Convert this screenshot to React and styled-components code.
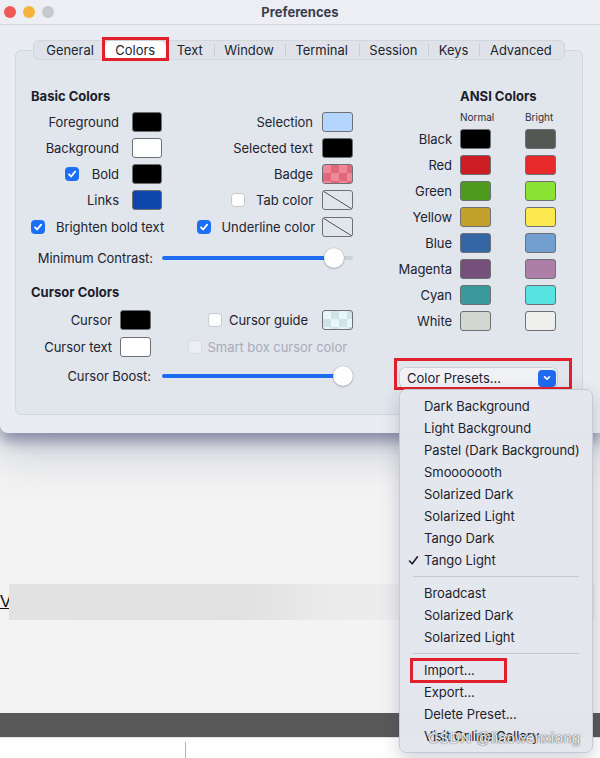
import React from "react";
import styled, { createGlobalStyle } from "styled-components";

const GlobalStyle = createGlobalStyle`
  html, body {
    margin: 0;
    padding: 0;
  }
  body {
    font-family: Inter, "Liberation Sans", sans-serif;
    background: #f3f3f3;
    color: #1f2130;
  }
`;

const tabs = ["General", "Colors", "Text", "Window", "Terminal", "Session", "Keys", "Advanced"];

const basicRows = [
  { label: "Foreground", color: "#000000", right: "Selection", rcolor: "#b4d5fd" },
  { label: "Background", color: "#ffffff", right: "Selected text", rcolor: "#000000" },
  { label: "Bold", check: true, color: "#000000", right: "Badge", rkind: "badge" },
  { label: "Links", color: "#0f46ab", right: "Tab color", rcheck: false, rkind: "none" },
];

const ansi = [
  ["Black", "#000000", "#555753"],
  ["Red", "#cc1d24", "#e8292a"],
  ["Green", "#4e9a1f", "#8ae234"],
  ["Yellow", "#c4a02d", "#fce94f"],
  ["Blue", "#3465a4", "#729fcf"],
  ["Magenta", "#75507b", "#ad7fa8"],
  ["Cyan", "#3a9a9b", "#57e3e1"],
  ["White", "#d3d7cf", "#eeeeec"],
];

const presetGroups = [
  [
    "Dark Background",
    "Light Background",
    "Pastel (Dark Background)",
    "Smooooooth",
    "Solarized Dark",
    "Solarized Light",
    "Tango Dark",
    "Tango Light",
  ],
  ["Broadcast", "Solarized Dark", "Solarized Light"],
  ["Import...", "Export...", "Delete Preset...", "Visit Online Gallery"],
];

const Page = styled.div`
  position: relative;
  width: 600px;
  height: 758px;
  overflow: hidden;
  background: #f3f3f3;
  display: flex;
  flex-direction: column;
`;

const Window = styled.div`
  position: relative;
  z-index: 1;
  flex: none;
  width: 600px;
  height: 433px;
  background: #e9ecf0;
  border-radius: 0 0 0 8px;
  box-shadow: 0 8px 14px rgba(60, 70, 110, 0.5), 0 22px 40px rgba(100, 110, 150, 0.28);
  display: flex;
  flex-direction: column;
`;

const TitleBar = styled.div`
  height: 24px;
  border-bottom: 1px solid #d3d6dd;
  background: #eceef3;
  display: grid;
  grid-template-columns: 1fr auto 1fr;
  align-items: center;
  padding: 0 4px;
`;

const Lights = styled.div`
  display: flex;
  gap: 7px;
`;

const Light = styled.span`
  width: 12px;
  height: 12px;
  border-radius: 50%;
  background: ${(p) => p.$c};
`;

const Title = styled.div`
  font-size: 13px;
  font-weight: 700;
  color: #3c3e4f;
`;

const Body = styled.div`
  flex: 1;
  display: flex;
  flex-direction: column;
  padding: 15px 17px 18px 15px;
`;

const Tabs = styled.div`
  position: relative;
  z-index: 1;
  align-self: center;
  display: flex;
  height: 18px;
  padding: 0 1px;
  background: #dfe3e9;
  border: 1px solid #d2d6dd;
  border-radius: 6px;
`;

const Tab = styled.div`
  position: relative;
  display: flex;
  align-items: center;
  padding: 0 10.8px;
  font-size: 13px;
  letter-spacing: -0.05px;
  color: #22242f;
  border-radius: 5px;
  background: ${(p) => (p.$active ? "#ffffff" : "transparent")};
  box-shadow: ${(p) => (p.$active ? "0 0 1px rgba(0,0,0,0.35)" : "none")};

  &::before {
    content: "";
    display: ${(p) => (p.$sep ? "block" : "none")};
    position: absolute;
    left: 0;
    top: 3px;
    width: 1px;
    height: 12px;
    background: #c9cdd4;
  }

  &::after {
    content: "";
    display: ${(p) => (p.$marked ? "block" : "none")};
    position: absolute;
    left: -3px;
    right: -3px;
    top: -4px;
    bottom: -2px;
    border: 3px solid #e2202c;
  }
`;

const GroupBox = styled.div`
  flex: 1;
  margin-top: -10px;
  background: #e1e5ec;
  border: 1px solid #d2d7df;
  border-radius: 6px;
  padding: 0 25px 0 15px;
  display: flex;
  justify-content: space-between;
`;

const LeftCol = styled.div`
  width: 322px;
  padding-top: 37px;
  display: flex;
  flex-direction: column;
`;

const RightCol = styled.div`
  width: 159px;
  padding-top: 37px;
  display: flex;
  flex-direction: column;
  align-items: flex-start;
`;

const Heading = styled.div`
  font-size: 13px;
  font-weight: 700;
  line-height: 16px;
  color: #1c1e2b;
  margin: ${(p) => p.$m || "0"};
`;

const BasicGrid = styled.div`
  display: grid;
  grid-template-columns: 101px 30px 160px 31px;
  grid-auto-rows: 26px;
  align-items: center;
`;

const CursorGrid = styled.div`
  display: grid;
  grid-template-columns: 89px 31px 171px 31px;
  grid-auto-rows: 27px;
  align-items: center;
`;

const Label = styled.div`
  display: flex;
  align-items: center;
  justify-content: ${(p) => (p.$start ? "flex-start" : "flex-end")};
  gap: ${(p) => p.$gap || 11}px;
  padding-right: ${(p) => p.$pr || 0}px;
  grid-column: ${(p) => p.$span || "auto"};
  font-size: 13px;
  letter-spacing: -0.05px;
  white-space: nowrap;
  color: ${(p) => (p.$disabled ? "#a7acb9" : "#22242f")};
`;

const Swatch = styled.div`
  box-sizing: border-box;
  width: ${(p) => p.$w || 31}px;
  height: 20px;
  border: 1px solid #6e7075;
  border-radius: 3px;
  background: ${(p) => {
    if (p.$kind === "badge")
      return "repeating-conic-gradient(#e1687b 0 25%, #ef8799 0 50%) 0 0 / 16px 16px";
    if (p.$kind === "guide")
      return "repeating-conic-gradient(#cfe3e8 0 25%, #e8f6f8 0 50%) 0 0 / 16px 16px";
    if (p.$kind === "none")
      return "linear-gradient(to top right, transparent calc(50% - 0.8px), #4b4d52 50%, transparent calc(50% + 0.8px))";
    return p.$c;
  }};
`;

const Box = styled.span`
  box-sizing: border-box;
  flex: none;
  width: 14px;
  height: 14px;
  border-radius: 3.5px;
  display: flex;
  align-items: center;
  justify-content: center;
  background: ${(p) => (p.$on ? "#1b6ff5" : p.$disabled ? "#eceef2" : "#ffffff")};
  border: 1px solid ${(p) => (p.$on ? "#1b6ff5" : p.$disabled ? "#d6d9df" : "#c5c9d0")};
`;

const Check = ({ on, disabled }) => (
  <Box $on={on} $disabled={disabled}>
    {on && (
      <svg width="10" height="10" viewBox="0 0 10 10">
        <path
          d="M2 5.3 L4.1 7.5 L8.1 2.6"
          fill="none"
          stroke="#fff"
          strokeWidth="1.8"
          strokeLinecap="round"
          strokeLinejoin="round"
        />
      </svg>
    )}
  </Box>
);

const SliderRow = styled.div`
  display: grid;
  grid-template-columns: 131px 191px;
  height: 26px;
  align-items: center;
  margin-top: ${(p) => p.$mt}px;
`;

const SliderBox = styled.div`
  position: relative;
  height: 20px;
  display: flex;
  align-items: center;
`;

const Track = styled.div`
  width: 100%;
  height: 4px;
  border-radius: 2px;
`;

const Thumb = styled.div`
  position: absolute;
  top: 0;
  width: 20px;
  height: 20px;
  border-radius: 50%;
  background: #ffffff;
  box-shadow: 0 0 1px rgba(0, 0, 0, 0.4), 0 1px 2px rgba(0, 0, 0, 0.2);
`;

const Slider = ({ value }) => {
  const left = value * 171;
  const fill = left + 10;
  return (
    <SliderBox>
      <Track
        style={{
          background: `linear-gradient(to right, #1e6cf0 ${fill}px, #cdd2da ${fill}px)`,
        }}
      />
      <Thumb style={{ left }} />
    </SliderBox>
  );
};

const AnsiGrid = styled.div`
  display: grid;
  grid-template-columns: 62px 65px 32px;
  grid-template-rows: 15px;
  grid-auto-rows: 26px;
  align-items: center;
`;

const ColHead = styled.div`
  font-size: 10px;
  color: #2a2c38;
  align-self: start;
  line-height: 12px;
`;

const PopupButton = styled.div`
  position: relative;
  box-sizing: border-box;
  margin: 34px 0 0 2px;
  width: 157px;
  height: 20px;
  display: flex;
  align-items: center;
  justify-content: space-between;
  padding: 0 1px 0 7px;
  background: #f1f2f5;
  border-radius: 5px;
  box-shadow: 0 0 0 0.5px rgba(0, 0, 0, 0.18), 0 1px 1px rgba(0, 0, 0, 0.1);
  font-size: 13px;
  color: #1f2130;

  &::after {
    content: "";
    position: absolute;
    left: -6px;
    right: -15px;
    top: -10px;
    bottom: -2px;
    border: 3px solid #e2202c;
  }
`;

const Chevron = styled.span`
  width: 18px;
  height: 17px;
  border-radius: 4px;
  background: #1f6af2;
  display: flex;
  align-items: center;
  justify-content: center;
`;

const Below = styled.div`
  flex: 1;
  display: flex;
  flex-direction: column;
  padding-top: 151px;
`;

const BandRow = styled.div`
  display: flex;
  align-items: center;
  height: 36px;
`;

const LinkText = styled.span`
  width: 9px;
  overflow: hidden;
  font-family: "Liberation Sans", sans-serif;
  font-size: 17px;
  color: #111;
  text-decoration: underline;
  white-space: nowrap;
`;

const Band = styled.div`
  width: 586px;
  height: 36px;
  background: linear-gradient(90deg, #e2e2e2 0%, #e1e1e1 40%, #ebebeb 55%, #eeeff0 85%, #e8eaee 100%);
`;

const DarkBar = styled.div`
  margin-top: 93px;
  height: 24px;
  background: #595959;
`;

const Footer = styled.div`
  flex: 1;
  background: #ffffff;
  border-top: 1px solid #e4e4e4;
`;

const Divider = styled.div`
  margin: 4px 0 0 185px;
  width: 1px;
  height: 17px;
  background: #b5b5b5;
`;

const Menu = styled.div`
  position: absolute;
  z-index: 5;
  left: 399px;
  top: 389px;
  width: 194px;
  box-sizing: border-box;
  padding: 5px 0;
  background: rgba(228, 231, 238, 0.98);
  border: 1px solid #c4c9d3;
  border-radius: 7px;
  box-shadow: 0 6px 18px rgba(40, 50, 80, 0.22);
`;

const MenuItem = styled.div`
  position: relative;
  height: 22px;
  display: grid;
  grid-template-columns: 24px 1fr;
  align-items: center;
  font-size: 13px;
  letter-spacing: -0.05px;
  color: #1d1f2c;
  white-space: nowrap;

  &::after {
    content: "";
    display: ${(p) => (p.$marked ? "block" : "none")};
    position: absolute;
    left: 10px;
    width: 97px;
    top: -1px;
    bottom: -2px;
    box-sizing: border-box;
    border: 3px solid #e2202c;
  }
`;

const MenuCheck = styled.span`
  display: flex;
  padding-left: 8px;
`;

const Separator = styled.div`
  height: 11px;
  display: flex;
  align-items: center;
  padding: 0 13px;

  &::before {
    content: "";
    flex: 1;
    height: 1px;
    background: #c5c9d1;
  }
`;

const Watermark = styled.div`
  position: absolute;
  z-index: 6;
  left: 428px;
  top: 729px;
  font-family: "Liberation Sans", sans-serif;
  font-size: 15px;
  color: rgba(255, 255, 255, 0.92);
  text-shadow: 0 0 1px rgba(40, 40, 40, 0.9), 0 0 2px rgba(60, 60, 60, 0.5);
  letter-spacing: 0.2px;
`;

export default function App() {
  return (
    <>
      <GlobalStyle />
      <Page>
        <Window>
          <TitleBar>
            <Lights>
              <Light $c="#ee5b52" />
              <Light $c="#f5b33c" />
              <Light $c="#c7cacd" />
            </Lights>
            <Title>Preferences</Title>
            <span />
          </TitleBar>
          <Body>
            <Tabs>
              {tabs.map((t, i) => (
                <Tab
                  key={t}
                  $active={t === "Colors"}
                  $marked={t === "Colors"}
                  $sep={i > 0 && t !== "Colors" && tabs[i - 1] !== "Colors"}
                >
                  {t}
                </Tab>
              ))}
            </Tabs>
            <GroupBox>
              <LeftCol>
                <Heading $m="0 0 5px">Basic Colors</Heading>
                <BasicGrid>
                  {basicRows.map((r) => (
                    <React.Fragment key={r.label}>
                      <Label $pr={13} $gap={13}>
                        {r.check && <Check on />}
                        {r.label}
                      </Label>
                      <Swatch $w={30} $c={r.color} />
                      <Label $pr={9}>
                        {r.rcheck !== undefined && <Check on={r.rcheck} />}
                        {r.right}
                      </Label>
                      <Swatch $c={r.rcolor} $kind={r.rkind} />
                    </React.Fragment>
                  ))}
                  <Label $start $span="1 / 3" style={{ marginTop: 2 }}>
                    <Check on />
                    Brighten bold text
                  </Label>
                  <Label $pr={7} $gap={10} style={{ marginTop: 2 }}>
                    <Check on />
                    Underline color
                  </Label>
                  <Swatch $kind="none" style={{ marginTop: 2 }} />
                </BasicGrid>
                <SliderRow $mt={6}>
                  <Label $pr={9}>Minimum Contrast:</Label>
                  <Slider value={0.95} />
                </SliderRow>
                <Heading $m="13px 0 6px">Cursor Colors</Heading>
                <CursorGrid>
                  <Label $pr={8}>Cursor</Label>
                  <Swatch $c="#000000" />
                  <Label $pr={14} $gap={7}>
                    <Check />
                    Cursor guide
                  </Label>
                  <Swatch $kind="guide" />
                  <Label $pr={8}>Cursor text</Label>
                  <Swatch $c="#ffffff" />
                  <Label $span="3 / 5" $pr={6} $gap={6} $disabled>
                    <Check disabled />
                    Smart box cursor color
                  </Label>
                </CursorGrid>
                <SliderRow $mt={3}>
                  <Label $pr={11}>Cursor Boost:</Label>
                  <Slider value={1} />
                </SliderRow>
              </LeftCol>
              <RightCol>
                <Heading $m="0 0 7px 62px">ANSI Colors</Heading>
                <AnsiGrid>
                  <span />
                  <ColHead>Normal</ColHead>
                  <ColHead>Bright</ColHead>
                  {ansi.map(([name, n, b]) => (
                    <React.Fragment key={name}>
                      <Label $pr={8}>{name}</Label>
                      <Swatch $c={n} />
                      <Swatch $c={b} />
                    </React.Fragment>
                  ))}
                </AnsiGrid>
                <PopupButton>
                  Color Presets...
                  <Chevron>
                    <svg width="10" height="10" viewBox="0 0 10 10">
                      <path
                        d="M2.6 3.8 L5 6.2 L7.4 3.8"
                        fill="none"
                        stroke="#fff"
                        strokeWidth="1.7"
                        strokeLinecap="round"
                        strokeLinejoin="round"
                      />
                    </svg>
                  </Chevron>
                </PopupButton>
              </RightCol>
            </GroupBox>
          </Body>
        </Window>

        <Below>
          <BandRow>
            <LinkText>Vi</LinkText>
            <Band />
          </BandRow>
          <DarkBar />
          <Footer>
            <Divider />
          </Footer>
        </Below>

        <Menu>
          {presetGroups.map((group, gi) => (
            <React.Fragment key={gi}>
              {gi > 0 && <Separator />}
              {group.map((item) => (
                <MenuItem key={item} $marked={item === "Import..."}>
                  <MenuCheck>
                    {item === "Tango Light" && (
                      <svg width="11" height="11" viewBox="0 0 11 11">
                        <path
                          d="M1.5 6 L4.2 8.8 L9.5 1.8"
                          fill="none"
                          stroke="#1d1f2c"
                          strokeWidth="1.6"
                          strokeLinecap="round"
                          strokeLinejoin="round"
                        />
                      </svg>
                    )}
                  </MenuCheck>
                  <span>{item}</span>
                </MenuItem>
              ))}
            </React.Fragment>
          ))}
        </Menu>

        <Watermark>CSDN @liaowenxiong</Watermark>
      </Page>
    </>
  );
}
